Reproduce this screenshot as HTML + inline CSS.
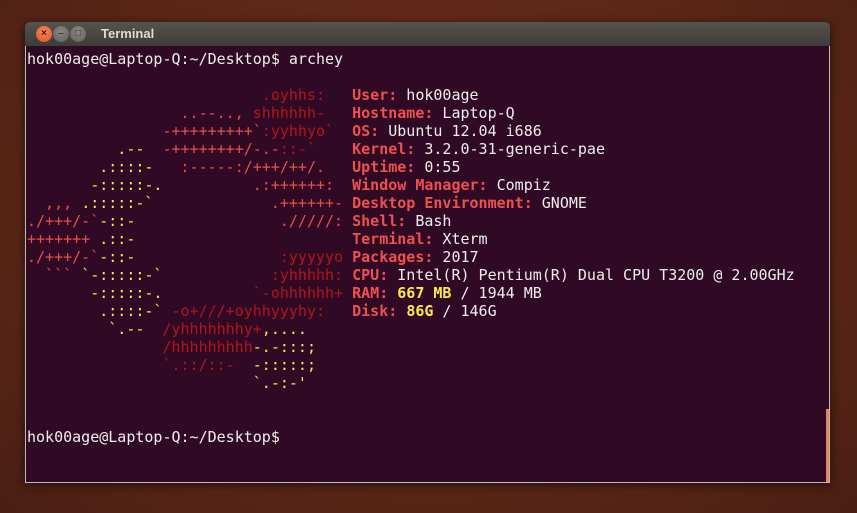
<!DOCTYPE html>
<html><head><meta charset="utf-8"><style>
html,body{margin:0;padding:0}
body{width:857px;height:513px;overflow:hidden;background:radial-gradient(ellipse at 50% 40%,#6e2e1e 0%,#5c2617 60%,#4a1f13 100%);position:relative;font-family:"DejaVu Sans Mono","Liberation Mono",monospace}
.win{position:absolute;left:25px;top:22px;width:805px;height:461px;box-shadow:0 2px 10px rgba(0,0,0,.6);border-radius:5px 5px 0 0;overflow:hidden}
.tb{position:absolute;left:0;top:0;width:805px;height:24px;background:linear-gradient(#56544e,#3d3c38);}
.tb .t{position:absolute;left:76px;top:4px;font:bold 13px "Liberation Sans",sans-serif;color:#dfdbd2}
.b{position:absolute;top:4px;width:16px;height:16px;border-radius:50%;font:bold 10px/16px "Liberation Sans",sans-serif;text-align:center;color:#3c3b37}
.c{left:11px;background:radial-gradient(circle at 50% 35%,#f58a5d,#e0521f);color:#4a1a0a}
.m{left:28px;background:radial-gradient(circle at 50% 35%,#8a8882,#5f5d57)}
.x{left:45px;background:radial-gradient(circle at 50% 35%,#8a8882,#5f5d57)}
.ct{position:absolute;left:0;top:24px;width:803px;height:436px;background:#300a24;border:1px solid #bbb;border-top:none}
pre{margin:0;position:absolute;left:1px;top:4px;font-size:15px;line-height:18px;color:#eeeeec;font-family:"DejaVu Sans Mono",monospace}
.r{color:#ef4c4c}.d{color:#b3151b}.y{color:#fce94f}.l{color:#ef5050;font-weight:bold}.Y{color:#fce94f;font-weight:bold}
.sb{position:absolute;left:800px;top:363px;width:3px;height:73px;background:#e4855d}
</style></head><body>
<div class="win">
<div class="tb"><div class="b c">×</div><div class="b m">–</div><div class="b x">□</div><div class="t">Terminal</div></div>
<div class="ct">
<pre>hok00age@Laptop-Q:~/Desktop$ archey

<span class="d">                          .oyhhs:</span>   <span class="l">User:</span> hok00age
<span class="r">                 ..--..,</span> <span class="d">shhhhhh-</span>   <span class="l">Hostname:</span> Laptop-Q
<span class="r">               -+++++++++&#96;</span><span class="d">:yyhhyo&#96;</span>  <span class="l">OS:</span> Ubuntu 12.04 i686
<span class="y">          .--</span>  <span class="r">-++++++++/-.-</span><span class="d">::-&#96;</span>    <span class="l">Kernel:</span> 3.2.0-31-generic-pae
<span class="y">        .::::-</span>   <span class="r">:-----:/+++/++/.</span>   <span class="l">Uptime:</span> 0:55
<span class="y">       -:::::-.</span>          <span class="r">.:++++++:</span>  <span class="l">Window Manager:</span> Compiz
<span class="r">  ,,,</span> <span class="y">.:::::-&#96;</span>             <span class="r">.++++++-</span> <span class="l">Desktop Environment:</span> GNOME
<span class="r">./+++/-&#96;</span><span class="y">-::-</span>                <span class="r">./////:</span> <span class="l">Shell:</span> Bash
<span class="r">+++++++</span> <span class="y">.::-</span>                        <span class="l">Terminal:</span> Xterm
<span class="r">./+++/-&#96;</span><span class="y">-::-</span>                <span class="d">:yyyyyo</span> <span class="l">Packages:</span> 2017
<span class="r">  &#96;&#96;&#96;</span> <span class="y">&#96;-:::::-&#96;</span>            <span class="d">:yhhhhh:</span> <span class="l">CPU:</span> Intel(R) Pentium(R) Dual CPU T3200 @ 2.00GHz
<span class="y">       -:::::-.</span>          <span class="d">&#96;-ohhhhhh+</span> <span class="l">RAM:</span> <span class="Y">667 MB</span> / 1944 MB
<span class="y">        .::::-&#96;</span> <span class="d">-o+///+oyhhyyyhy:</span>   <span class="l">Disk:</span> <span class="Y">86G</span> / 146G
<span class="y">         &#96;.--</span>  <span class="d">/yhhhhhhhy+</span><span class="y">,....</span>
               <span class="d">/hhhhhhhhh</span><span class="y">-.-:::;</span>
               <span class="d">&#96;.::/::-</span>  <span class="y">-:::::;</span>
                         <span class="y">&#96;.-:-'</span>


hok00age@Laptop-Q:~/Desktop$</pre>
<div class="sb"></div>
</div>
</div>
</body></html>
